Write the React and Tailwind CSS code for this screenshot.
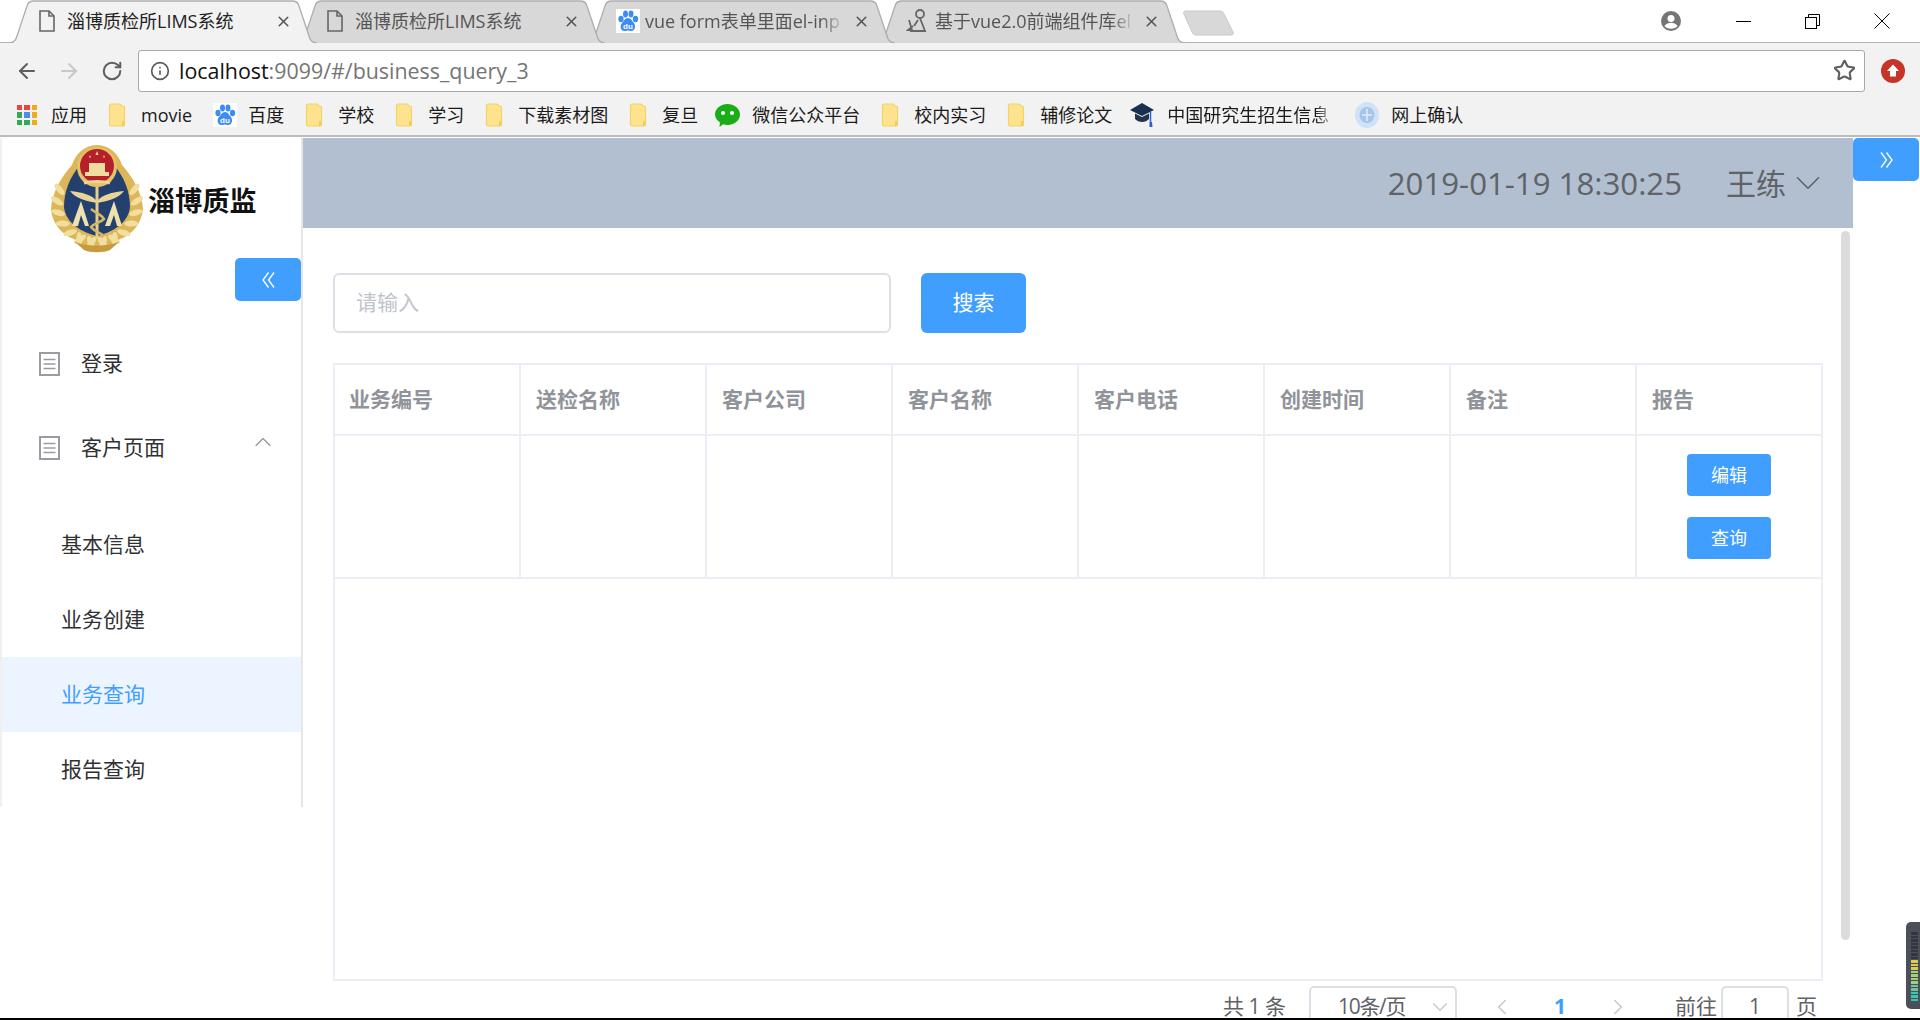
import React from "react";
import {
  ArrowLeft,
  ArrowRight,
  ChevronDown,
  ChevronLeft,
  ChevronRight,
  ChevronUp,
  Info,
  RotateCw,
  Star,
  X,
} from "lucide-react";

const columns = ["业务编号", "送检名称", "客户公司", "客户名称", "客户电话", "创建时间", "备注", "报告"];

const subMenu = [
  { label: "基本信息" },
  { label: "业务创建" },
  { label: "业务查询", active: true },
  { label: "报告查询" },
];

// wreath leaves for the emblem, placed along both sides of the badge
const leaves = Array.from({ length: 9 }, (_, i) => {
  const a = ((i * 17 - 20) * Math.PI) / 180;
  return { x: 40 * Math.cos(a), y: 64 + 40 * Math.sin(a), rot: (i * 17 - 20) + 60 };
});

const PageIcon = () => (
  <svg width="18" height="22" viewBox="0 0 18 22" fill="none" stroke="#666" strokeWidth="1.6">
    <path d="M2 1h9l5 5v15H2z" />
    <path d="M11 1v5h5" />
  </svg>
);

const BaiduIcon = () => (
  <svg width="24" height="24" viewBox="0 0 24 24">
    <rect width="24" height="24" fill="#fff" />
    <g fill="#3b8cf5">
      <ellipse cx="5" cy="10" rx="2.6" ry="3.3" />
      <ellipse cx="9.5" cy="5" rx="2.5" ry="3.4" />
      <ellipse cx="15" cy="5" rx="2.5" ry="3.4" />
      <ellipse cx="19.5" cy="10" rx="2.6" ry="3.3" />
      <path d="M12 9c3 0 4 3 6 5 2 3 1 8-3 8-1 0-2-.6-3-.6S10 22 8.500 22c-4 0-5-5-2.500-8 2-2 3-5 6-5z" />
    </g>
    <text x="12" y="19.500" textAnchor="middle" fontSize="8" fontWeight="700" fill="#fff" fontFamily="Liberation Sans, sans-serif">du</text>
  </svg>
);

const ScaleIcon = () => (
  <svg width="22" height="26" viewBox="0 0 22 26" fill="none" stroke="#666" strokeWidth="1.8">
    <circle cx="14" cy="6" r="4" />
    <path d="M3 12l3 10h-4l5-4M14 10l5 13h-15" />
    <path d="M12 12l-4 6" />
  </svg>
);

const DoubleChevron = ({ flip }) => (
  <svg width="13" height="16" viewBox="0 0 13 16" fill="none" stroke="#fff" strokeWidth="1.3" className={flip ? "-scale-x-100" : ""}>
    <path d="M6.500 .5L1 8l5.500 7.500M12 .5L6.500 8l5.500 7.500" />
  </svg>
);

const Tab = ({ title, icon, active, fade, margin }) => (
  <div className={`relative h-[42px] w-[308px] shrink-0 ${margin}`}>
    <svg className="absolute inset-0" width="308" height="43" viewBox="0 0 308 43">
      <path
        d="M0 43C5 43 7 40 8 36L18 6C19 2 21 1 25 1H283C287 1 289 2 290 6L300 36C301 40 303 43 308 43"
        fill={active ? "#f2f2f2" : "#d8d8d8"}
        stroke="#aeaeae"
        strokeWidth="1.300"
      />
    </svg>
    <div className="relative flex h-full items-center pl-[29px]">
      <div className="flex w-[29px] shrink-0">{icon}</div>
      <span
        className={`w-[200px] overflow-hidden whitespace-nowrap text-[18px] ${active ? "text-[#222]" : "text-[#555]"} ${
          fade ? "[mask-image:linear-gradient(to_right,black_88%,transparent)]" : ""
        }`}
      >
        {title}
      </span>
      <X size={17} strokeWidth={2.2} className="ml-[8px] text-[#555]" />
    </div>
  </div>
);

const FolderIcon = () => (
  <svg width="18" height="24" viewBox="0 0 18 24">
    <path d="M1.500 2.500a1.500 1.500 0 0 1 1.500-1.500h9l2 2h1a1.500 1.500 0 0 1 1.500 1.500v17a1.500 1.500 0 0 1-1.500 1.500H3a1.500 1.500 0 0 1-1.500-1.500z" fill="#fde38e" stroke="#f5d265" strokeWidth="1.200" />
    <path d="M15 23v-5" stroke="#eec552" strokeWidth="1.500" />
  </svg>
);

const AppsIcon = () => (
  <div className="grid h-[20px] w-[20px] grid-cols-3 gap-[2px]">
    <span className="bg-[#e8453c]" />
    <span className="bg-[#e8453c]" />
    <span className="bg-[#f4a81c]" />
    <span className="bg-[#34a853]" />
    <span className="bg-[#4a8cf0]" />
    <span className="bg-[#f4a81c]" />
    <span className="bg-[#34a853]" />
    <span className="bg-[#34a853]" />
    <span className="bg-[#f4a81c]" />
  </div>
);

const WechatIcon = () => (
  <svg width="27" height="27" viewBox="0 0 27 27">
    <path d="M13.500 2C20 2 26 6.500 26 12.500S20 23 13.500 23c-1.500 0-3-.2-4.300-.7L5.500 25l.4-4.700C3 18.400 1 15.700 1 12.500 1 6.500 7 2 13.500 2z" fill="#1aad19" />
    <circle cx="9" cy="11" r="2" fill="#fff" />
    <circle cx="18" cy="11" r="2" fill="#fff" />
  </svg>
);

const CapIcon = () => (
  <svg width="24" height="28" viewBox="0 0 24 28">
    <path d="M12 2L24 9l-12 6L0 9z" fill="#17304f" />
    <path d="M5 12.500l7 3.500 7-3.500V18c-2 2-4 3-7 3s-5-1-7-3z" fill="#22344c" />
    <path d="M20.500 11v10" stroke="#2a5fd0" strokeWidth="1.500" />
    <path d="M19.500 21h2.500l.5 5h-3z" fill="#2a5fd0" />
  </svg>
);

const GlobeIcon = () => (
  <svg width="24" height="26" viewBox="0 0 24 26">
    <ellipse cx="12" cy="13" rx="12" ry="13" fill="#cfe2f7" />
    <ellipse cx="12" cy="13" rx="7.500" ry="8" fill="#a5c6ea" />
    <path d="M12 7v12M7 13h10" stroke="#e2eefb" strokeWidth="1.500" />
  </svg>
);

const Bookmark = ({ icon, slot, label, fade, textClass }) => (
  <div className="flex shrink-0 items-center">
    <div className={`flex ${slot}`}>{icon}</div>
    <span
      className={`whitespace-nowrap text-[18px] text-[#1a1a1a] ${textClass || ""} ${
        fade ? "w-[169px] overflow-hidden [mask-image:linear-gradient(to_right,black_88%,transparent)]" : ""
      }`}
    >
      {label}
    </span>
  </div>
);

const MenuIcon = () => (
  <svg width="21" height="24" viewBox="0 0 21 24" fill="none">
    <rect x="1" y="1" width="19" height="22" stroke="#9a9ba3" strokeWidth="2" />
    <path d="M4.500 7.500h12M4.500 12h12M4.500 16.500h12" stroke="#9a9ba3" strokeWidth="1.600" />
  </svg>
);

const Emblem = () => (
  <svg width="94" height="120" viewBox="0 0 94 120" className="shrink-0 blur-[0.5px]">
    <path
      d="M47 6C34 6 25 16 22 26C11 38 2 54 1 70C2 84 12 96 24 100C32 108 40 110 47 110C54 110 62 108 70 100C82 96 92 84 93 70C92 54 83 38 72 26C69 16 60 6 47 6Z"
      fill="#dcb658"
    />
    {leaves.map((l, i) => (
      <g key={i} fill="#f1dfa0">
        <ellipse cx={47 + l.x} cy={l.y} rx="3" ry="7" transform={`rotate(${l.rot} ${47 + l.x} ${l.y})`} />
        <ellipse cx={47 - l.x} cy={l.y} rx="3" ry="7" transform={`rotate(${-l.rot} ${47 - l.x} ${l.y})`} />
      </g>
    ))}
    <path d="M30 26C20 38 14 52 14 68C15 80 26 92 47 97C68 92 79 80 80 68C80 52 74 38 64 26Z" fill="#24406f" />
    <path d="M20 52C32 53 42 56 47 62C52 56 62 53 74 52C68 60 57 62 47 64C37 62 26 60 20 52Z" fill="#e9d59a" />
    <path d="M47 48V100" stroke="#e6cf8b" strokeWidth="3" />
    <path d="M22 87L31 62L39 87Z" fill="#efe0b0" />
    <path d="M55 87L64 62L72 87Z" fill="#efe0b0" />
    <path d="M28 87L31 76L35 87Z" fill="#24406f" />
    <path d="M60 87L64 76L67 87Z" fill="#24406f" />
    <path d="M41 70C46 74 52 76 54 80C50 84 44 84 41 88C44 92 50 94 53 96" fill="none" stroke="#d5b862" strokeWidth="2.500" />
    <circle cx="47" cy="28" r="20" fill="#e3c26a" />
    <circle cx="47" cy="27" r="17" fill="#b5202a" />
    <path d="M35 33H59V37H35zM39 24H55V33H39z" fill="#efdca0" />
    <path d="M47 12l1.500 4h-3zM40 16l1 2.500h-2zM54 16l1 2.500h-2z" fill="#efdca0" />
    <path d="M34 44C40 42 54 42 60 44" stroke="#efd68f" strokeWidth="3" fill="none" />
    <path d="M24 102C34 108 60 108 70 102L60 111C54 114 40 114 34 111Z" fill="#c79a3e" />
  </svg>
);

const PrimaryButton = ({ children, className }) => (
  <button className={`bg-[#409eff] text-white flex items-center justify-center ${className}`}>{children}</button>
);

export default function App() {
  return (
    <div className="relative flex h-[1020px] w-[1920px] flex-col overflow-hidden bg-white font-['Open_Sans','Noto_Sans_CJK_SC',sans-serif]">
      {/* window title strip */}
      <div className="relative flex h-[43px] shrink-0 items-start border-b border-[#b4b4b4] bg-white">
        <div className="relative z-40">
          <Tab active margin="ml-[9px]" title="淄博质检所LIMS系统" icon={<PageIcon />} />
        </div>
        <div className="relative z-30 -ml-[20px]">
          <Tab title="淄博质检所LIMS系统" icon={<PageIcon />} />
        </div>
        <div className="relative z-20 -ml-[18px]">
          <Tab fade title="vue form表单里面el-inp" icon={<BaiduIcon />} />
        </div>
        <div className="relative z-10 -ml-[18px]">
          <Tab fade title="基于vue2.0前端组件库el" icon={<ScaleIcon />} />
        </div>
        <svg className="-ml-[2px] mt-[10px] shrink-0" width="52" height="26" viewBox="0 0 52 26">
          <path d="M3 1H37C39 1 40 2 41 4L50 22C51 24 50 25 48 25H13C11 25 10 24 9 22L1 4C0 2 1 1 3 1Z" fill="#d8d8d8" stroke="#c8c8c8" />
        </svg>
        <div className="ml-auto flex h-[42px] items-center">
          <svg width="20" height="20" viewBox="0 0 20 20" className="mr-[28px]">
            <circle cx="10" cy="10" r="10" fill="#757575" />
            <circle cx="10" cy="7.500" r="3.500" fill="#fff" />
            <path d="M3.500 15c1.500-2.500 4-3.200 6.500-3.200s5 .7 6.500 3.200c-1.500 1.800-3.800 2.800-6.500 2.800s-5-1-6.500-2.800z" fill="#fff" />
          </svg>
          <div className="flex w-[69px] justify-center">
            <div className="h-px w-[15px] bg-black" />
          </div>
          <div className="flex w-[69px] justify-center">
            <svg width="15" height="15" viewBox="0 0 15 15" fill="none" stroke="#000">
              <rect x="0.500" y="3.500" width="11" height="11" />
              <path d="M3.500 3.500V.500H14.500V11.500H11.500" />
            </svg>
          </div>
          <div className="flex w-[73px] justify-center pr-[4px]">
            <svg width="16" height="16" viewBox="0 0 16 16" stroke="#000">
              <path d="M.5.500l15 15M15.500.500l-15 15" />
            </svg>
          </div>
        </div>
      </div>

      {/* address bar */}
      <div className="flex h-[49px] shrink-0 items-center bg-[#f2f2f2] pt-[6px]">
        <ArrowLeft size={24} strokeWidth={2} className="ml-[15px] text-[#5f5f5f]" />
        <ArrowRight size={24} strokeWidth={2} className="ml-[18px] text-[#c8c8c8]" />
        <RotateCw size={22} strokeWidth={2.2} className="ml-[20px] text-[#5f5f5f]" />
        <div className="ml-[15px] flex h-[42px] w-[1727px] items-center rounded-[3px] border border-[#a9a9a9] bg-white">
          <Info size={20} strokeWidth={2} className="ml-[11px] text-[#5a5a5a]" />
          <div className="ml-[9px] whitespace-nowrap pt-px text-[21.4px]">
            <span className="text-[#111]">localhost</span>
            <span className="text-[#757575]">:9099/#/business_query_3</span>
          </div>
          <Star size={23} strokeWidth={2.2} className="ml-auto mr-[8px] text-[#5f5f5f]" />
        </div>
        <svg width="24" height="24" viewBox="0 0 24 24" className="ml-[16px] shrink-0">
          <circle cx="12" cy="12" r="12" fill="#c5362a" />
          <path d="M12 5.500l6 6.500h-3v5.500H9V12H6z" fill="#fff" />
        </svg>
      </div>

      {/* bookmarks */}
      <div className="flex h-[45px] shrink-0 items-center gap-[21px] border-b-2 border-[#bcbcbc] bg-[#f2f2f2] pl-[17px] pt-[3px]">
        <Bookmark icon={<AppsIcon />} slot="w-[34px]" label="应用" />
        <Bookmark icon={<FolderIcon />} slot="w-[33px]" label="movie" />
        <Bookmark icon={<BaiduIcon />} slot="w-[35px]" label="百度" />
        <Bookmark icon={<FolderIcon />} slot="w-[33px]" label="学校" />
        <Bookmark icon={<FolderIcon />} slot="w-[33px]" label="学习" />
        <Bookmark icon={<FolderIcon />} slot="w-[33px]" label="下载素材图" />
        <Bookmark icon={<FolderIcon />} slot="w-[33px]" label="复旦" textClass="mr-[-5px]" />
        <Bookmark icon={<WechatIcon />} slot="w-[38px]" label="微信公众平台" />
        <Bookmark icon={<FolderIcon />} slot="w-[33px]" label="校内实习" />
        <Bookmark icon={<FolderIcon />} slot="w-[33px]" label="辅修论文" textClass="mr-[-3px]" />
        <Bookmark icon={<CapIcon />} slot="w-[37px]" label="中国研究生招生信息" fade textClass="mr-[-2px]" />
        <Bookmark icon={<GlobeIcon />} slot="w-[36px]" label="网上确认" />
      </div>

      {/* page */}
      <div className="flex min-h-0 flex-1 pt-px">
        <aside className="flex h-[669px] w-[303px] shrink-0 flex-col border-x-2 border-l-[#f0f0f0] border-r-[#e6e6e6] bg-white">
          <div className="flex h-[120px] shrink-0 items-center pl-[48px] pt-[2px]">
            <Emblem />
            <span className="ml-[4px] mt-[4px] whitespace-nowrap text-[27px] font-bold tracking-[0.2px] text-[#111]">淄博质监</span>
          </div>
          <PrimaryButton className="h-[43px] w-[66px] shrink-0 self-end rounded-[5px]">
            <DoubleChevron />
          </PrimaryButton>
          <div className="mt-[21px] flex h-[84px] shrink-0 items-center pl-[37px] text-[21px] text-[#303133]">
            <MenuIcon />
            <span className="ml-[21px]">登录</span>
          </div>
          <div className="flex h-[84px] shrink-0 items-center pl-[37px] text-[21px] text-[#303133]">
            <MenuIcon />
            <span className="ml-[21px]">客户页面</span>
            <ChevronUp size={28} strokeWidth={1} className="ml-auto mr-[24px] -mt-[12px] text-[#909399]" />
          </div>
          <div className="mt-[17px] flex flex-col">
            {subMenu.map((item) => (
              <div
                key={item.label}
                className={`flex h-[75px] items-center pl-[59px] text-[21px] ${
                  item.active ? "bg-[#ecf5ff] text-[#409eff]" : "text-[#303133]"
                }`}
              >
                {item.label}
              </div>
            ))}
          </div>
        </aside>

        <main className="relative flex min-w-0 flex-1 flex-col">
          <header className="flex h-[90px] shrink-0 items-center justify-end bg-[#b2bfd0] pr-[24px] text-[#606266]">
            <span className="whitespace-nowrap text-[31.2px]">2019-01-19 18:30:25</span>
            <span className="ml-[44px] text-[30px]">王练</span>
            <ChevronDown size={42} strokeWidth={0.9} className="ml-px text-[#606266]" />
          </header>

          {/* scrollbar thumb */}
          <div className="absolute left-[1538px] top-[93px] h-[709px] w-[9px] rounded-[5px] bg-[#dbdbdd]" />

          <div className="flex flex-col pl-[30px] pt-[45px]">
            <div className="flex items-center">
              <div className="flex h-[60px] w-[558px] items-center rounded-[6px] border-2 border-[#dcdfe6] pl-[21px] text-[21px] text-[#c0c4cc]">
                请输入
              </div>
              <PrimaryButton className="ml-[30px] h-[60px] w-[105px] rounded-[6px] text-[21px]">搜索</PrimaryButton>
            </div>

            <div className="mt-[30px] h-[618px] w-[1490px] border-2 border-[#ebeef5]">
              <div className="grid h-[71px] grid-cols-[186px_repeat(6,186px)_1fr] border-b-2 border-[#ebeef5]">
                {columns.map((col) => (
                  <div
                    key={col}
                    className="flex items-center border-r-2 border-[#ebeef5] pl-[15px] text-[21px] font-bold text-[#909399] first:pl-[14px] last:border-r-0"
                  >
                    {col}
                  </div>
                ))}
              </div>
              <div className="grid h-[143px] grid-cols-[186px_repeat(6,186px)_1fr] border-b-2 border-[#ebeef5]">
                {columns.map((col, i) => (
                  <div key={col} className="flex flex-col items-center justify-center gap-[21px] border-r-2 border-[#ebeef5] last:border-r-0">
                    {i === columns.length - 1 && (
                      <>
                        <PrimaryButton className="h-[42px] w-[84px] rounded-[4px] text-[18px]">编辑</PrimaryButton>
                        <PrimaryButton className="h-[42px] w-[84px] rounded-[4px] text-[18px]">查询</PrimaryButton>
                      </>
                    )}
                  </div>
                ))}
              </div>
            </div>

            {/* pagination */}
            <div className="mt-[5px] flex h-[42px] w-[1490px] items-center justify-end pr-[6px] text-[21px] text-[#606266]">
              <span className="whitespace-nowrap [word-spacing:-1px]">共 1 条</span>
              <div className="ml-[23px] flex h-[42px] w-[148px] items-center rounded-[5px] border-2 border-[#dcdfe6] pl-[27px]">
                <span className="whitespace-nowrap tracking-[-1.3px]">10条/页</span>
                <ChevronDown size={26} strokeWidth={1} className="ml-auto mr-[2px] text-[#c0c4cc]" />
              </div>
              <div className="ml-[16px] flex w-[58px] justify-center">
                <ChevronLeft size={26} strokeWidth={1.2} className="text-[#c0c4cc]" />
              </div>
              <div className="flex w-[58px] justify-center font-bold text-[#409eff]">1</div>
              <div className="flex w-[58px] justify-center">
                <ChevronRight size={26} strokeWidth={1.2} className="text-[#c0c4cc]" />
              </div>
              <span className="ml-[28px] whitespace-nowrap">前往</span>
              <div className="ml-[4px] flex h-[42px] w-[68px] items-center justify-center rounded-[5px] border-2 border-[#dcdfe6]">1</div>
              <span className="ml-[7px]">页</span>
            </div>
          </div>
        </main>

        <div className="w-[67px] shrink-0">
          <PrimaryButton className="h-[43px] w-[66px] rounded-[5px]">
            <DoubleChevron flip />
          </PrimaryButton>
        </div>
      </div>

      {/* bottom edge of the desktop */}
      <div className="z-10 h-[2px] shrink-0 bg-black" />

      {/* level meter overlay */}
      <div className="absolute bottom-[11px] right-0 flex h-[87px] w-[14px] flex-col items-end gap-px rounded-l-[5px] bg-[#4b4f5a] pr-[2px] pt-[10px]">
        {Array.from({ length: 20 }, (_, i) => (
          <div
            key={i}
            className={`h-[2.5px] w-[7px] ${
              i < 8 ? "bg-[#33363f]" : i < 11 ? "bg-[#d8cf52]" : i < 15 ? "bg-[#9fd07a]" : i < 17 ? "bg-[#6cc79a]" : "bg-[#3cc4ae]"
            }`}
          />
        ))}
      </div>
    </div>
  );
}
